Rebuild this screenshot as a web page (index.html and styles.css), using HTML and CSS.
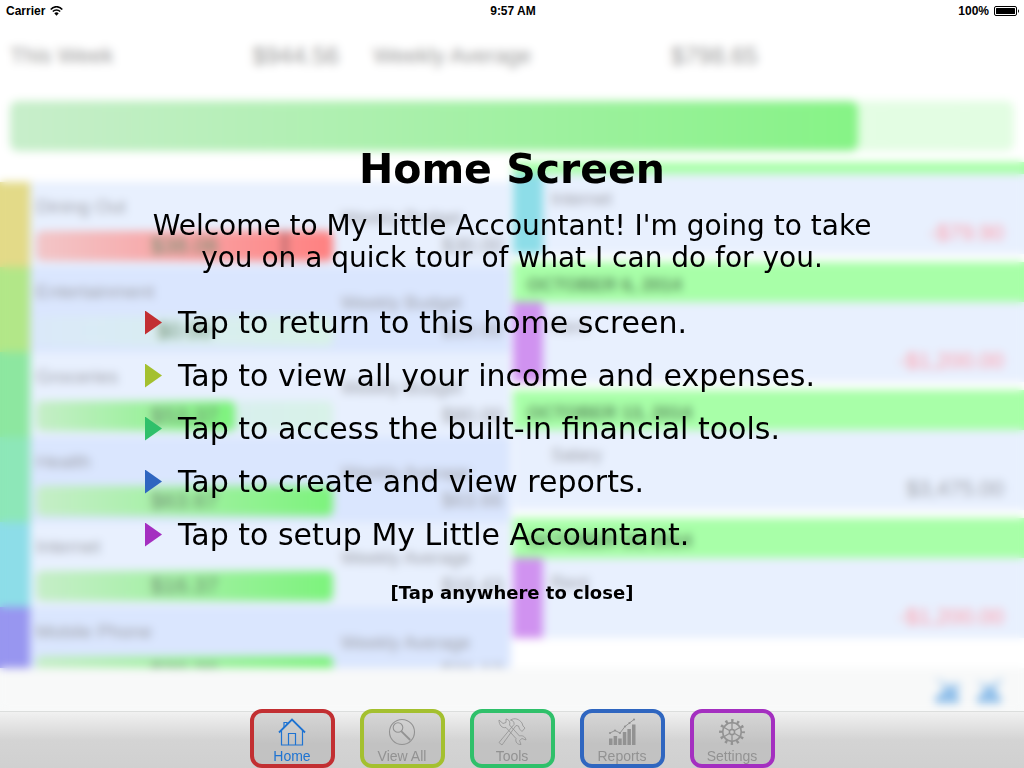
FILE: index.html
```html
<!DOCTYPE html>
<html lang="en">
<head>
<meta charset="utf-8">
<meta name="viewport" content="width=device-width, initial-scale=1">
<title>My Little Accountant</title>
<link rel="stylesheet" href="styles.css">
</head>
<body>
<div class="screen">
  <header class="status">
    <span class="status-left">Carrier
      <svg width="13" height="10" viewBox="0 0 13 10" fill="none" stroke="#000" stroke-width="1.5"><path d="M.7 3.5C4-.3 9-.3 12.300 3.500M2.800 5.600c2.200-2.300 5.200-2.300 7.400 0"/><path d="M4.300 7.300c1.300-1.300 3.100-1.300 4.400 0L6.500 9.800z" fill="#000" stroke="none"/></svg>
    </span>
    <span class="status-time">9:57 AM</span>
    <span class="status-right">100%
      <svg width="26" height="10" viewBox="0 0 26 10"><rect x=".5" y=".5" width="22" height="9" rx="1.500" fill="none" stroke="#000"/><rect x="2" y="2" width="19" height="6" rx=".5"/><path d="M24 3.200c1.300.3 1.300 3.300 0 3.600z"/></svg>
    </span>
  </header>

  <main class="stage">
    <div class="dashboard">
      <section class="summary">
        <div class="summary-line">
          <div class="summary-item"><span>This Week</span><span class="summary-value">$944.56</span></div>
          <div class="summary-item"><span>Weekly Average</span><span class="summary-value">$798.65</span></div>
        </div>
        <div class="total"><div class="total-fill"></div></div>
      </section>

      <div class="columns">
        <section class="budgets">
          <article class="budget gold">
            <div class="spent"><span class="name">Dining Out</span><div class="meter"><div class="fill over"></div><span class="marker"></span><span class="amount">$38.06</span></div></div>
            <div class="goal"><span>Weekly Budget</span><span class="goal-value">$30.00</span></div>
          </article>
          <article class="budget lime">
            <div class="spent"><span class="name">Entertainment</span><div class="meter"><span class="amount">$0.00</span></div></div>
            <div class="goal"><span>Weekly Budget</span><span class="goal-value">$10.00</span></div>
          </article>
          <article class="budget green">
            <div class="spent"><span class="name">Groceries</span><div class="meter"><div class="fill partial"></div><span class="amount">$53.37</span></div></div>
            <div class="goal"><span>Weekly Budget</span><span class="goal-value">$80.00</span></div>
          </article>
          <article class="budget mint">
            <div class="spent"><span class="name">Health</span><div class="meter"><div class="fill"></div><span class="amount">$63.67</span></div></div>
            <div class="goal"><span>Weekly Average</span><span class="goal-value">$63.66</span></div>
          </article>
          <article class="budget cyan">
            <div class="spent"><span class="name">Internet</span><div class="meter"><div class="fill"></div><span class="amount">$16.37</span></div></div>
            <div class="goal"><span>Weekly Average</span><span class="goal-value">$16.43</span></div>
          </article>
          <article class="budget violet">
            <div class="spent"><span class="name">Mobile Phone</span><div class="meter"><div class="fill"></div><span class="amount">$20.29</span></div></div>
            <div class="goal"><span>Weekly Average</span><span class="goal-value">$21.12</span></div>
          </article>
        </section>

        <section class="upcoming">
          <div class="date cut"></div>
          <article class="entry cyan"><span>Internet</span><span class="sum minus">-$79.90</span></article>
          <div class="date">OCTOBER 6, 2014</div>
          <article class="entry purple"><span>Rent</span><span class="sum minus">-$1,200.00</span></article>
          <div class="date">OCTOBER 13, 2014</div>
          <article class="entry"><span>Salary</span><span class="sum">$3,475.00</span></article>
          <div class="date">OCTOBER 15, 2014</div>
          <article class="entry purple"><span>Rent</span><span class="sum minus">-$1,200.00</span></article>
        </section>
      </div>

      <div class="tools">
        <svg width="28" height="28" viewBox="0 0 28 28" fill="#4b97e0"><path d="M0 1l14 7 12-2v9H12z" opacity=".35"/><path d="M1 27v-5l10-9h10l4 8v6z" opacity=".6"/></svg>
        <svg width="28" height="28" viewBox="0 0 28 28" fill="#4b97e0"><path d="M0 4l12 5L28 1l-9 14H9z" opacity=".35"/><path d="M1 27v-5l9-9h8l7 9v5z" opacity=".6"/></svg>
      </div>
    </div>

    <section class="tour">
      <h1>Home Screen</h1>
      <p class="welcome">Welcome to My Little Accountant! I'm going to take<br>you on a quick tour of what I can do for you.</p>
      <ul class="tips">
        <li class="tip-home">Tap to return to this home screen.</li>
        <li class="tip-view">Tap to view all your income and expenses.</li>
        <li class="tip-tools">Tap to access the built-in financial tools.</li>
        <li class="tip-reports">Tap to create and view reports.</li>
        <li class="tip-settings">Tap to setup My Little Accountant.</li>
      </ul>
      <button class="close" type="button">[Tap anywhere to close]</button>
    </section>
  </main>

  <nav class="tabs">
    <button class="tab tab-home" type="button">
      <svg width="30" height="30" viewBox="0 0 30 30" fill="none" stroke="currentColor" stroke-width="1.200"><path d="M2 15.500L15 2.500l13 13" stroke-width="1.800"/><path d="M4.500 14v14h21V14M11.500 28V16.500h7V28M7 10V5.500h3V7"/></svg>
      Home
    </button>
    <button class="tab tab-view" type="button">
      <svg width="30" height="30" viewBox="0 0 30 30" fill="none" stroke="currentColor" stroke-width="1.100"><circle cx="15" cy="15" r="12.500"/><circle cx="11" cy="10.500" r="4.800"/><path d="M14.200 14.200l9 8.800" stroke-width="1.800"/></svg>
      View All
    </button>
    <button class="tab tab-tools" type="button">
      <svg width="30" height="30" viewBox="0 0 30 30" fill="none" stroke="currentColor" stroke-width=".8" stroke-linejoin="round"><path d="M2 3l4 3.500 3-1L9 2c3 .5 4.500 3 3.500 6l10 11c3-1 6 .8 6.500 4l-4-1.500-2.500 2 1.500 4c-3.500.3-6-2.500-5-6l-10-11C5 11.500 2 8 2 3z"/><path d="M13.500 3C18 .5 22 2 25 6l1 3 2 2-3 3.500-2.500-2.500-1-3-2.500-.5L5 28 2 25.500 17 7.500C17.500 5 16 3.500 13.500 3z"/></svg>
      Tools
    </button>
    <button class="tab tab-reports" type="button">
      <svg width="30" height="30" viewBox="0 0 30 30" fill="currentColor"><path d="M2 21.500h3.500V28H2zM6.600 19h3.500v9H6.600zM11.200 21.500h3.500V28h-3.500zM15.800 15h3.500v13h-3.500zM20.400 12h3.500v16h-3.500zM25 7.500h3.500V28H25z"/><path d="M3 16l5-2.500 5 2.500 5-6.500 4.500-3.500L27 2.500" fill="none" stroke="currentColor"/><circle cx="3" cy="16" r="1.100"/><circle cx="8" cy="13.500" r="1.100"/><circle cx="13" cy="16" r="1.100"/><circle cx="18" cy="9.500" r="1.100"/><circle cx="22.500" cy="6" r="1.100"/><circle cx="27" cy="2.500" r="1.100"/></svg>
      Reports
    </button>
    <button class="tab tab-settings" type="button">
      <svg width="30" height="30" viewBox="0 0 30 30" fill="none" stroke="currentColor"><circle cx="15" cy="15" r="9.300" stroke-width="1.700"/><circle cx="15" cy="15" r="2.600" stroke-width="1.500"/><path d="M15 12.500V6M15 17.500V24M17.200 13.700l5.600-3.200M12.800 16.300l-5.600 3.200M17.200 16.300l5.600 3.200M12.800 13.700l-5.600-3.200" stroke-width="1.300"/><circle cx="15" cy="15" r="11.300" stroke-width="3.200" stroke-dasharray="2.400 3.517" stroke-dashoffset="1.200"/></svg>
      Settings
    </button>
  </nav>
</div>
</body>
</html>
```
FILE: styles.css
```css
* {
  box-sizing: border-box;
}

body {
  margin: 0;
  background: #fff;
  color: #000;
  font-family: "Liberation Sans", Arial, sans-serif;
}

button {
  font: inherit;
  color: inherit;
}

.screen {
  display: flex;
  flex-direction: column;
  height: 100vh;
}

/* Status bar */
.status {
  display: grid;
  grid-template-columns: 1fr auto 1fr;
  align-items: center;
  padding: 0 4px 0 6px;
  font-size: 12px;
  font-weight: bold;
  line-height: 22px;
}

.status-left,
.status-right {
  display: flex;
  align-items: center;
  gap: 5px;
}

.status-right {
  justify-content: flex-end;
}

.stage {
  flex: 1;
  min-height: 0;
  display: grid;
  grid-template-rows: minmax(0, 1fr);
}

.dashboard,
.tour {
  grid-area: 1 / 1;
}

/* Dashboard behind the tour */
.dashboard {
  display: flex;
  flex-direction: column;
  min-height: 0;
  color: #a2a4ac;
}

.summary {
  padding: 19px 10px 11px;
}

.summary-line {
  display: grid;
  grid-template-columns: 12fr 14fr 8fr;
  gap: 30px;
  margin-bottom: 30px;
  color: #9c9c9c;
  font-size: 22px;
  line-height: 30px;
}

.summary-item {
  display: flex;
  justify-content: space-between;
}

.summary-value {
  padding-right: 4px;
  font-size: 24px;
}

.total {
  height: 50px;
  border-radius: 8px;
  background: linear-gradient(90deg, #eeffee, #e2fde2);
}

.total-fill {
  width: 84.5%;
  height: 100%;
  border-radius: 8px;
  background: linear-gradient(90deg, #c8eecb, #86f386);
}

.columns {
  flex: 1;
  min-height: 0;
  display: grid;
  grid-template-columns: 1fr 1fr;
  gap: 2px;
  overflow: hidden;
}

.budgets {
  padding-top: 20px;
}

.budget {
  display: grid;
  grid-template-columns: 11fr 6fr;
  gap: 8px;
  height: 85px;
  padding: 0 8px 0 6px;
  border-left: 30px solid;
  background: #e8f0fe;
  font-size: 19px;
}

.budget:nth-child(even) {
  background: #dae6fe;
}

.gold { border-color: #e3da88; }
.lime { border-color: #b2e788; }
.green { border-color: #8de7a0; }
.mint { border-color: #8de7b8; }
.cyan { border-color: #8ddde8; }
.violet { border-color: #9896f0; }

.spent,
.goal {
  display: flex;
  flex-direction: column;
  line-height: 24px;
}

.spent {
  gap: 12px;
  padding-top: 13px;
}

.goal {
  padding-top: 24px;
  font-size: 18px;
}

.goal-value {
  text-align: right;
  font-size: 20px;
  line-height: 30px;
}

.meter {
  display: grid;
  height: 30px;
  border-radius: 6px;
  background: linear-gradient(90deg, #dae9f9, #d8f2e8);
}

.fill,
.amount,
.marker {
  grid-area: 1 / 1;
}

.fill {
  border-radius: 6px;
  background: linear-gradient(90deg, #c6eec8, #7cf37c);
}

.partial {
  width: 67%;
}

.over {
  background: linear-gradient(90deg, #f2c6c8, #ff8080);
}

.marker {
  width: 4px;
  margin-left: 83%;
  background: #a86468;
}

.amount {
  justify-self: center;
  color: #6d8f70;
  font-size: 22px;
  line-height: 30px;
}

.date {
  height: 40px;
  padding-left: 14px;
  background: #a8ffa8;
  color: #5c905e;
  font-size: 18px;
  font-weight: bold;
  line-height: 46px;
}

.cut {
  height: 12px;
}

.entry {
  display: flex;
  flex-direction: column;
  height: 80px;
  margin-bottom: 8px;
  padding: 13px 20px 0 8px;
  border-left: 30px solid #e8f0fe;
  background: #e8f0fe;
  font-size: 18px;
  line-height: 24px;
}

.entry.cyan { border-color: #8ddde8; }
.entry.purple { border-color: #d092f0; }

.sum {
  padding-top: 10px;
  text-align: right;
  font-size: 22px;
}

.minus {
  color: #ffa0ac;
}

.tools {
  display: flex;
  justify-content: flex-end;
  align-items: center;
  gap: 14px;
  height: 43px;
  padding: 0 20px;
  background: #f8f9f9;
}

/* Tour overlay */
.tour {
  z-index: 1;
  display: flex;
  flex-direction: column;
  align-items: center;
  padding-top: 122px;
  backdrop-filter: blur(4px);
  font-family: "DejaVu Sans", sans-serif;
}

.tour h1 {
  margin: 0 0 16px;
  font-size: 41px;
  line-height: 50px;
}

.welcome {
  margin: 0 0 22px;
  font-size: 28px;
  line-height: 32px;
  text-align: center;
}

.tips {
  width: 100%;
  max-width: 734px;
  margin: 0;
  padding: 0;
  list-style: none;
  font-size: 30px;
  line-height: 53px;
}

.tips li {
  display: flex;
  align-items: center;
  gap: 16px;
}

.tips li::before {
  content: "";
  width: 17px;
  height: 24px;
  background: var(--accent);
  clip-path: polygon(0 0, 100% 50%, 0 100%);
}

.tip-home, .tab-home { --accent: #c22f32; }
.tip-view, .tab-view { --accent: #a4c02f; }
.tip-tools, .tab-tools { --accent: #2fc06a; }
.tip-reports, .tab-reports { --accent: #2f66c0; }
.tip-settings, .tab-settings { --accent: #a42fc0; }

.close {
  margin-top: 20px;
  padding: 0;
  border: 0;
  background: none;
  font-size: 18px;
  font-weight: bold;
  line-height: 24px;
}

/* Tab bar */
.tabs {
  z-index: 2;
  display: flex;
  justify-content: center;
  align-items: flex-end;
  gap: 25px;
  height: 57px;
  border-top: 1px solid #dcdedd;
  background: linear-gradient(#f1f1f1, #d4d4d4 50%, #d0d0d0);
}

.tab {
  flex: none;
  display: flex;
  flex-direction: column;
  align-items: center;
  width: 85px;
  height: 59px;
  padding: 4px 0 0;
  border: 4px solid var(--accent);
  border-radius: 12px;
  background: linear-gradient(#d6d6d6, #c2c2c2 60%);
  color: #929292;
  font-size: 14px;
  line-height: 18px;
}

.tab svg {
  flex: none;
}

.tab-home {
  color: #1e73d2;
}
```
